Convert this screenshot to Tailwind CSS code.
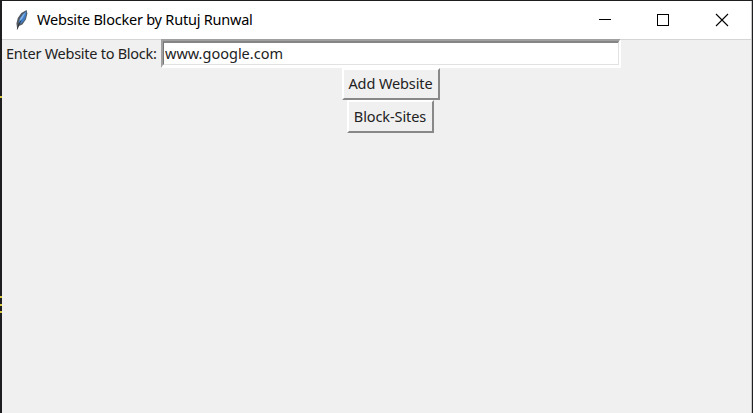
<!DOCTYPE html>
<html lang="en">
<head>
<meta charset="utf-8">
<title>Website Blocker by Rutuj Runwal</title>
<script src="https://cdn.jsdelivr.net/npm/@tailwindcss/browser@4"></script>
</head>
<body class="relative h-[413px] w-[753px] overflow-hidden bg-[#1e1e20] pt-px pr-px pl-[2px] font-['Noto_Sans',sans-serif]">
<div class="absolute left-0 top-[96px] h-[2px] w-[2px] bg-[#d8c840]"></div>
<div class="absolute left-0 top-[296px] h-[2px] w-[2px] bg-[#d8c840]"></div>
<div class="absolute left-0 top-[304px] h-[2px] w-[2px] bg-[#d8c840]"></div>
<div class="absolute left-0 top-[311px] h-[2px] w-[2px] bg-[#d8c840]"></div>
<main class="flex h-[412px] w-[750px] flex-col border-r border-[#c8c8c8] bg-[#f0f0f0]">
  <header class="flex h-[38px] shrink-0 items-center bg-white">
    <svg class="-mt-px ml-[12px] h-[22px] w-[16px]" viewBox="0 0 16 22">
      <path d="M3.2 20 2.4 14.5 3.8 9 7.3 4 12.6 1 13.4 4.5 11.9 10.5 8.4 15.5 5 17Z" fill="#555b64"/>
      <path d="M4.6 14 6 9 9.5 4.5 12.4 2.2 12.2 6 10.6 11 7.4 14.4Z" fill="#3f7cc4"/>
      <path d="M6 10 9 5.4 11.6 3.2 9 8.5 5.5 13Z" fill="#86b6e8"/>
      <path d="M3.2 20.5 5 15 7 11.5" fill="none" stroke="#25292e" stroke-width=".8"/>
    </svg>
    <h1 class="-mt-[2px] ml-[7px] w-[400px] text-[14.5px] leading-[20px] tracking-[-0.22px] whitespace-nowrap text-black">Website Blocker by Rutuj Runwal</h1>
    <svg class="ml-auto h-[38px] w-[176px]" viewBox="0 0 176 38" fill="none" stroke="#000" shape-rendering="crispEdges">
      <path d="M24 18.5H36"/>
      <rect x="82.5" y="13.5" width="11" height="11"/>
      <path d="M141 13 153 25M153 13 141 25" shape-rendering="auto" stroke-width="1.1"/>
    </svg>
  </header>
  <div class="flex h-[29px] shrink-0 border-t border-[#d5d5d5]">
    <label for="site" class="w-[159px] pl-[4px] pt-[3px] text-[14.5px] leading-[20px] tracking-[-0.26px] whitespace-nowrap text-[#222]">Enter Website to Block:</label>
    <div class="-mt-px h-[29px] w-[460px] border-2 border-t-[#a0a0a0] border-r-white border-b-white border-l-[#a0a0a0] border-b-3 border-r-2">
      <input id="site" value="www.google.com" class="block h-full w-full border-t-2 border-l border-r border-b border-t-[#858585] border-r-[#e2e2e2] border-b-[#e2e2e2] border-l-[#777] bg-white pb-[2px] pl-px text-[14.5px] leading-[20px] text-[#222] outline-none">
    </div>
  </div>
  <div class="flex w-[777px] flex-col items-center">
    <button class="h-[32px] w-[98px] border-2 border-t-white border-r-[#888] border-b-[#888] border-l-white pb-[2px] text-[14.5px] leading-[26px] tracking-[-0.1px] whitespace-nowrap text-[#222]">Add Website</button>
    <button class="h-[33px] w-[87px] border-2 border-t-white border-r-[#888] border-b-[#888] border-l-white pr-px pb-[2px] text-[14.5px] leading-[26px] tracking-[-0.1px] whitespace-nowrap text-[#222]">Block-Sites</button>
  </div>
</main>
</body>
</html>
